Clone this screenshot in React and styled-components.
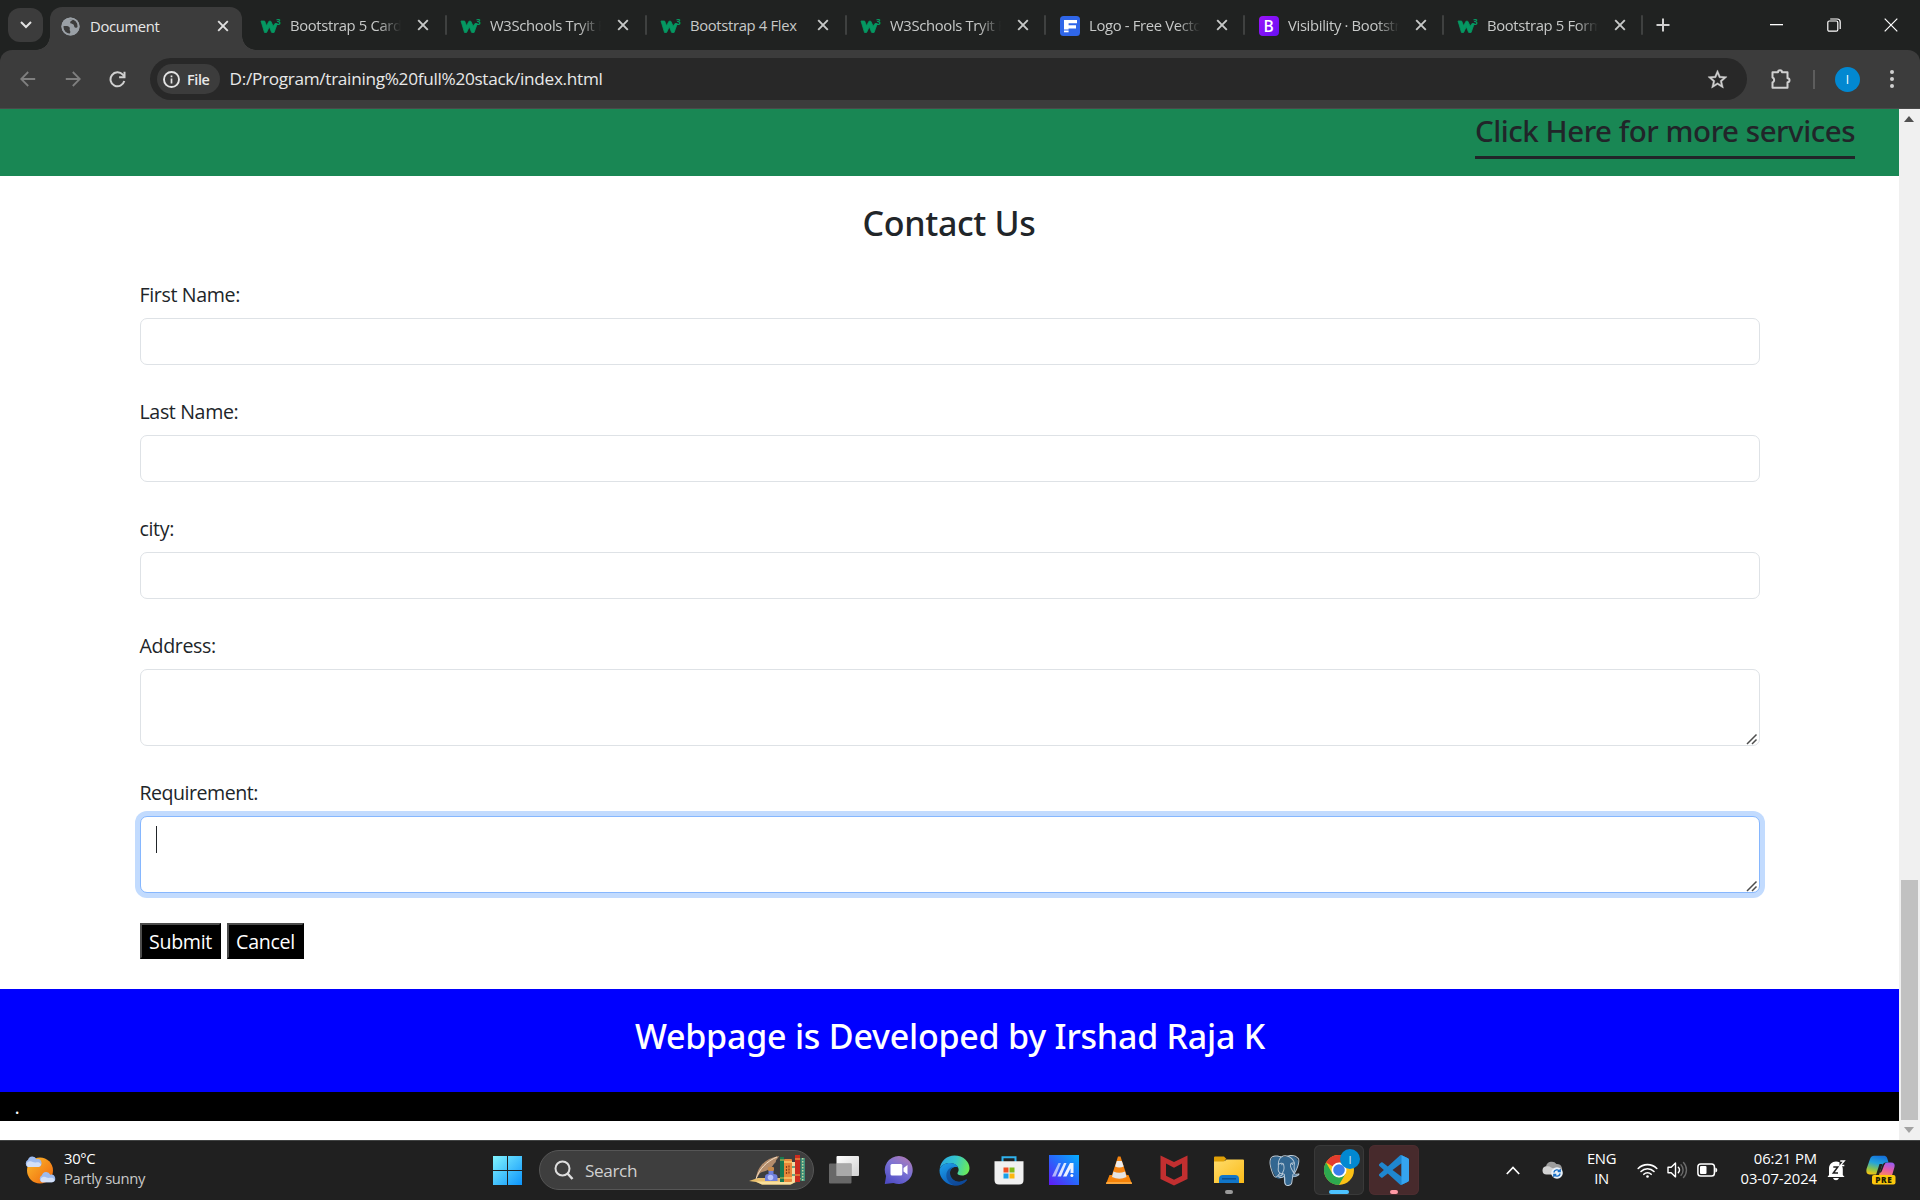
import React from 'react';
import styled, { createGlobalStyle, css } from 'styled-components';
import { SiPostgresql } from 'react-icons/si';

const sans = '"Open Sans", "Noto Sans", sans-serif';
const display = '"Noto Sans", "Open Sans", sans-serif';

const GlobalStyle = createGlobalStyle`
  *, *::before, *::after { box-sizing: border-box; }
  html, body { margin: 0; padding: 0; overflow: hidden; background: #fff; }
  body { font-family: ${sans}; }
  svg { display: block; flex: none; }
`;

const Screen = styled.div`
  width: 1920px;
  height: 1200px;
  display: grid;
  grid-template-rows: 50px 59px 1031px 60px;
  overflow: hidden;
`;

/* ---------- Tab strip ---------- */

const TabStrip = styled.header`
  display: flex;
  align-items: stretch;
  background: #202221;
  color: #e3e3e3;
`;

const TabSearch = styled.button`
  width: 35px;
  height: 34px;
  margin: 8px 3px 0 8px;
  padding: 0;
  border: 0;
  border-radius: 12px;
  background: #3c3c3c;
  display: grid;
  place-items: center;
`;

const Tab = styled.div`
  position: relative;
  display: flex;
  align-items: center;
  flex: none;
  width: ${(p) => p.$width}px;
  height: 50px;
  padding: 0 0 0 14px;
  ${(p) =>
    !p.$active &&
    css`
      &::after {
        content: '';
        position: absolute;
        right: -1px;
        top: 15px;
        width: 2px;
        height: 20px;
        border-radius: 1px;
        background: #3f4140;
      }
    `}
  ${(p) =>
    p.$active &&
    css`
      margin: 7px 4px 0;
      height: 43px;
      padding: 0 0 6px 10px;
      border-radius: 12px 12px 0 0;
      background: #3c3c3c;
      &::before,
      &::after {
        content: '';
        position: absolute;
        bottom: 0;
        width: 14px;
        height: 14px;
      }
      &::before {
        left: -14px;
        background: radial-gradient(circle at 0 0, transparent 13.5px, #3c3c3c 14px);
      }
      &::after {
        right: -14px;
        background: radial-gradient(circle at 100% 0, transparent 13.5px, #3c3c3c 14px);
      }
    `}
`;

const TabIcon = styled.span`
  width: 21px;
  height: 24px;
  margin-top: 1px;
  display: grid;
  place-items: center;
`;

const TabTitle = styled.span`
  width: 111px;
  margin-left: 9px;
  overflow: hidden;
  white-space: nowrap;
  font-size: 14.8px;
  line-height: 24px;
  letter-spacing: -0.33px;
  color: ${(p) => (p.$active ? '#e8e8e8' : '#c7c9c8')};
  ${(p) =>
    p.$fade &&
    css`
      mask-image: linear-gradient(90deg, #000 80%, transparent 100%);
    `}
`;

const TabClose = styled.span`
  width: 20px;
  height: 24px;
  margin-left: 11.5px;
  display: grid;
  place-items: center;
`;

const NewTab = styled.span`
  width: 42px;
  display: grid;
  place-items: center;
`;

const WindowControls = styled.div`
  margin-left: auto;
  margin-right: 1px;
  display: grid;
  grid-template-columns: repeat(3, 57px);
  place-items: center;
  height: 49px;
`;

const Letter = styled.span`
  display: grid;
  place-items: center;
  width: 20px;
  height: 20px;
  border-radius: 4px;
  background: linear-gradient(135deg, #9b12fb, #6610f2);
  color: #fff;
  font: 600 15.5px/20px ${sans};
`;

/* ---------- Toolbar ---------- */

const ToolbarBack = styled.div`
  background: #202221;
`;

const Toolbar = styled.div`
  display: flex;
  align-items: center;
  height: 59px;
  border-radius: 12px 12px 0 0;
  border-bottom: 1px solid #4a4a4a;
  background: #3c3c3c;
  padding-left: 5px;
`;

const ToolButton = styled.span`
  width: 45px;
  height: 36px;
  display: grid;
  place-items: center;
`;

const Omnibox = styled.div`
  display: flex;
  align-items: center;
  width: 1597px;
  height: 42px;
  margin-left: 10px;
  padding: 0 18px 0 7px;
  border-radius: 21px;
  background: #282828;
`;

const FileChip = styled.span`
  display: flex;
  align-items: center;
  gap: 7px;
  width: 63px;
  height: 30px;
  padding-left: 6px;
  border-radius: 15px;
  background: #3c3c3c;
  color: #e8e8e8;
  font-size: 14.4px;
  font-weight: 600;
  letter-spacing: -0.4px;
`;

const Address = styled.span`
  flex: 1;
  margin-left: 9.5px;
  color: #e8e8e8;
  font-size: 17.2px;
  letter-spacing: -0.3px;
  line-height: 24px;
`;

const ToolbarEnd = styled.div`
  display: flex;
  align-items: center;
  margin-left: 23px;
`;

const Divider = styled.span`
  width: 2px;
  height: 19px;
  margin: 0 20px 0 21px;
  background: #5d5d5d;
`;

const Avatar = styled.span`
  display: grid;
  place-items: center;
  width: 25px;
  height: 25px;
  margin-right: 29px;
  border-radius: 50%;
  background: #0288d1;
  color: #fff;
  font-size: 12px;
`;

/* ---------- Page ---------- */

const Viewport = styled.div`
  display: grid;
  grid-template-columns: 1899px 21px;
  background: #fff;
`;

const Page = styled.main`
  display: flex;
  flex-direction: column;
  color: #212529;
`;

const Services = styled.section`
  display: flex;
  justify-content: flex-end;
  height: 67px;
  padding-right: 44px;
  background: #198754;
`;

const ServicesLink = styled.a`
  width: 380px;
  height: 50px;
  border-bottom: 3px solid #212529;
  font: 500 29.5px/43px ${display};
  letter-spacing: -0.46px;
  white-space: nowrap;
`;

const Contact = styled.form`
  display: flex;
  flex-direction: column;
  height: 813px;
  padding: 0 140px 0 139px;
`;

const Heading = styled.h2`
  margin: 24px 0 37px;
  text-align: center;
  font: 500 34px/46px ${display};
  letter-spacing: -0.35px;
`;

const Field = styled.div`
  display: flex;
  flex-direction: column;
  height: ${(p) => (p.$tall ? 147 : 117)}px;
  margin: 0 -1px 0 1px;
`;

const Label = styled.label`
  height: 35px;
  margin-left: -0.5px;
  font-size: 19.6px;
  line-height: 23px;
  letter-spacing: ${(p) => p.$tracking || -0.36}px;
`;

const control = css`
  display: block;
  width: 100%;
  margin: 0;
  border: 1px solid #dee2e6;
  border-radius: 7px;
  outline: 0;
  background: #fff;
  font: 400 20px ${sans};
  padding: 8px 15px;
`;

const Input = styled.input`
  ${control}
  height: 47px;
`;

const AreaBox = styled.div`
  position: relative;
  height: 77px;
`;

const TextArea = styled.textarea`
  ${control}
  height: 77px;
  resize: none;
  ${(p) =>
    p.$focused &&
    css`
      border-color: #86b7fe;
      box-shadow: 0 0 0 5px #c2dbfe;
    `}
`;

const Grip = styled.svg`
  position: absolute;
  right: 2px;
  bottom: 1px;
`;

const Caret = styled.span`
  position: absolute;
  left: 16px;
  top: 10px;
  width: 1px;
  height: 27px;
  background: #212529;
`;

const Actions = styled.div`
  display: flex;
  gap: 6px;
  margin: -5px 0 0 1px;
`;

const Button = styled.button`
  width: ${(p) => p.$width}px;
  height: 36px;
  padding: 1px 0 0;
  border: 2px solid;
  border-color: #4c4c4c #000 #000 #4c4c4c;
  background: #000;
  color: #fff;
  font: 400 19.6px/30px ${sans};
  letter-spacing: -0.3px;
`;

const Credit = styled.footer`
  height: 103px;
  padding: 24px 0 0 1px;
  background: #00f;
  color: #fff;
  text-align: center;
  font: 500 34px/46px ${display};
  letter-spacing: -0.23px;
`;

const BottomStrip = styled.div`
  height: 29px;
  padding-left: 14.5px;
  background: #000;
  color: #fff;
  font-size: 20px;
  line-height: 30px;
`;

const Scrollbar = styled.div`
  display: flex;
  flex-direction: column;
  align-items: center;
  background: #f0f0f0;
`;

const ScrollArrow = styled.span`
  width: 21px;
  height: 20px;
  padding-right: 2px;
  display: grid;
  place-items: center;
`;

const Thumb = styled.span`
  width: 17px;
  height: 240px;
  margin-top: auto;
  background: #c1c1c1;
`;

/* ---------- Taskbar ---------- */

const Taskbar = styled.footer`
  display: grid;
  grid-template-columns: 483px 936px 1fr;
  align-items: center;
  padding-bottom: 1px;
  border-top: 1px solid #414343;
  background: #202020;
  color: #fff;
`;

const Weather = styled.div`
  display: flex;
  align-items: center;
  padding-left: 24px;
  gap: 8px;
`;

const Lines = styled.div`
  display: flex;
  flex-direction: column;
  align-items: ${(p) => p.$align || 'flex-start'};
  margin-bottom: 4px;
  font-size: 14.8px;
  line-height: 20px;
  letter-spacing: ${(p) => p.$tracking || -0.33}px;
  white-space: nowrap;
`;

const Muted = styled.span`
  color: #c9c9c9;
`;

const Apps = styled.div`
  display: flex;
  align-items: center;
  gap: 5px;
`;

const AppButton = styled.span`
  position: relative;
  display: grid;
  place-items: center;
  width: 50px;
  height: 50px;
  border-radius: 6px;
  background: ${(p) => p.$bg || 'transparent'};
  box-shadow: ${(p) => (p.$ring ? `inset 0 0 0 1px ${p.$ring}` : 'none')};
`;

const Running = styled.span`
  position: absolute;
  bottom: 1px;
  left: 50%;
  width: ${(p) => p.$width}px;
  height: 4px;
  border-radius: 2px;
  background: ${(p) => p.$color};
  transform: translateX(-50%);
`;

const Profile = styled.span`
  position: absolute;
  left: 26px;
  top: 4px;
  display: grid;
  place-items: center;
  width: 20px;
  height: 20px;
  border-radius: 50%;
  background: #0288d1;
  color: #d6ecf9;
  font-size: 11px;
`;

const Search = styled.div`
  display: flex;
  align-items: center;
  width: 275px;
  height: 40px;
  margin-left: 1px;
  padding: 0 7px 0 14px;
  border: 1px solid #565656;
  border-radius: 20px;
  background: #3e3e3e;
`;

const SearchText = styled.span`
  flex: 1;
  margin-left: 11px;
  color: #d0d0d0;
  font-size: 17.2px;
  letter-spacing: -0.4px;
`;

const Tray = styled.div`
  display: grid;
  grid-template-columns: 101px 44px 75px 19px 30px 38px 91px 38px 1fr;
  align-items: center;
`;

const TrayItem = styled.span`
  display: flex;
  justify-content: ${(p) => p.$at || 'flex-start'};
  padding-left: ${(p) => p.$indent || 0}px;
`;

/* ---------- Icons ---------- */

const Close = ({ color = '#e0e0e0' }) => (
  <svg width="12" height="12" viewBox="0 0 12 12" stroke={color} strokeWidth="1.9">
    <path d="M1.2 1.2l9.6 9.6M10.8 1.2l-9.6 9.6" />
  </svg>
);

const Globe = () => (
  <svg width="19" height="19" viewBox="0 0 19 19">
    <circle cx="9.5" cy="9.5" r="9" fill="#9aa0a6" />
    <path d="M2.3 9.2c2.6-.6 5.2-.3 6.2 1 .9 1.2-.4 2.3.5 3.6.7 1 .2 2.4-.5 3.200C5 16.5 2 13.500 2.300 9.200zM8 2.300c1.400-.5 2.700-.4 3.800 0-.2 1.500-2.400 1.500-2.600 3-.2 1.700 2.300 1.200 3.300 2.300 1 1.200.3 2.800 2 3.100 1 .2 1.700-.4 2.200-1 .1-3.800-1.600-6.200-4-7.400" fill="#3c3c3c" />
    <circle cx="9.500" cy="9.500" r="8.200" fill="none" stroke="#9aa0a6" strokeWidth="1.800" />
  </svg>
);

const W3 = () => (
  <svg width="21" height="18" viewBox="0 0 21 18">
    <path d="M1 4h3.600l2 4.800L9 4.200h1.800l2.400 5L15 6.500h2.300l-3.200 9h-2.400L9.300 9.800 6.600 15.500H4.500z" fill="#059862" stroke="#059862" strokeWidth=".8" />
    <text x="16" y="7.500" fill="#059862" fontSize="8.500" fontWeight="700" fontFamily="Open Sans, sans-serif">3</text>
  </svg>
);

const LogoF = () => (
  <svg width="20" height="20" viewBox="0 0 20 20">
    <rect width="20" height="20" rx="3.500" fill="#2f66e8" />
    <path d="M4 4h13v3.200H8.600v2H16v3.200H8.600v1H4z" fill="#fff" />
    <path d="M4 14.500h4.600v1.800H4z" fill="#fff" />
  </svg>
);

const Arrow = ({ flip }) => (
  <svg width="16" height="16" viewBox="0 0 16 16" fill="none" stroke="#7f7f7f" strokeWidth="1.800">
    {flip ? <path d="M.8 8h13.500M7.800 1l7 7-7 7" /> : <path d="M15.200 8H1.700M8.200 1l-7 7 7 7" />}
  </svg>
);

const Reload = () => (
  <svg width="17" height="17" viewBox="0 0 17 17" fill="none" stroke="#d0d0d0" strokeWidth="2">
    <path d="M15.300 10.100A7 7 0 1 1 13.800 3.700L15.500 5.700" />
    <path d="M15.500 .8v5.400h-5.400" />
  </svg>
);

const Info = () => (
  <svg width="17" height="17" viewBox="0 0 17 17" fill="none" stroke="#e3e3e3">
    <circle cx="8.500" cy="8.500" r="7.500" strokeWidth="1.900" />
    <path d="M8.500 7.600v5M8.500 4.400v1.800" strokeWidth="1.700" />
  </svg>
);

const Star = () => (
  <svg width="23" height="23" viewBox="0 0 24 24" fill="#d0d0d0" stroke="#d0d0d0" strokeWidth=".4">
    <path d="M22 9.240l-7.190-.62L12 2 9.190 8.630 2 9.240l5.460 4.730L5.820 21 12 17.270 18.180 21l-1.630-7.030L22 9.240zM12 15.400l-3.760 2.270 1-4.280-3.320-2.880 4.380-.38L12 6.100l1.710 4.040 4.380.38-3.320 2.880 1 4.280L12 15.400z" />
  </svg>
);

const Puzzle = () => (
  <svg width="22" height="22" viewBox="0 0 22 22" fill="none" stroke="#d0d0d0" strokeWidth="2" strokeLinejoin="round">
    <path d="M2.500 4.200h5.500a2 2 0 0 1 4 0h5.500v6a2 2 0 0 1 0 4v5.600h-15v-5.300a2.700 2.700 0 0 0 0-5z" />
  </svg>
);

const Dots = () => (
  <svg width="6" height="20" viewBox="0 0 6 20" fill="#d0d0d0">
    <circle cx="3" cy="3" r="2" />
    <circle cx="3" cy="10" r="2" />
    <circle cx="3" cy="17" r="2" />
  </svg>
);

const GripIcon = () => (
  <Grip width="12" height="12" viewBox="0 0 12 12" stroke="#4d4d4d" strokeWidth="1.500">
    <path d="M1 11L10.500 1.500M6 11l4.500-4.500" />
  </Grip>
);

const Cloud = ({ x, y, s = 1 }) => (
  <g transform={`translate(${x} ${y}) scale(${s})`}>
    <path d="M4 11a4 4 0 0 1 0-7.200A4.500 4.500 0 0 1 12.500 3.200 3.900 3.900 0 0 1 14.500 11z" fill="#9dbbf0" />
    <path d="M4 11a3 3 0 0 1 1-5.500c3-1 4 1.500 7 1 2.500-.4 4 0 5 2A3 3 0 0 1 14.500 11z" fill="#d3e0f8" />
  </g>
);

const Sun = () => (
  <svg width="32" height="30" viewBox="0 0 32 30">
    <defs>
      <linearGradient id="sun" x1="0" y1="0" x2="1" y2="1">
        <stop offset="0" stopColor="#fbbc2c" />
        <stop offset="1" stopColor="#f0640c" />
      </linearGradient>
    </defs>
    <circle cx="16" cy="15.500" r="13" fill="url(#sun)" />
    <Cloud x="0" y="1" />
    <Cloud x="14" y="16.500" s="0.980" />
  </svg>
);

const Start = () => (
  <svg width="30" height="30" viewBox="0 0 30 30">
    <defs>
      <linearGradient id="win" x1="0" y1="0" x2="30" y2="30" gradientUnits="userSpaceOnUse">
        <stop offset="0" stopColor="#83f5fe" />
        <stop offset="1" stopColor="#0a92fb" />
      </linearGradient>
    </defs>
    <path d="M0 1h14v14H0zM15 1h14v14H15zM0 16h14v14H0zM15 16h14v14H15z" fill="url(#win)" />
  </svg>
);

const Magnifier = () => (
  <svg width="20" height="20" viewBox="0 0 20 20" fill="none" stroke="#dedede" strokeWidth="2">
    <circle cx="8.500" cy="8.500" r="7" />
    <path d="M13.500 13.500l5 5.500" strokeWidth="2.500" />
  </svg>
);

const Books = () => (
  <svg width="58" height="30" viewBox="0 0 58 30">
    <path d="M1 26l9-3h45l-7 4-6 2.500H14L8 27z" fill="#e9bf6d" />
    <path d="M8 26.500h40l-5 3H14z" fill="#f9df9c" />
    <path d="M8 24C9 12 17 3 31 1c-1 3-4 4-3 6-3 2-3 5-7 7-3 3-6 2-9 4z" fill="#b48d6c" />
    <path d="M8 24C11 14 19 6 29 2" stroke="#f3dfc5" fill="none" />
    <rect x="20" y="12" width="6" height="4" rx="1" fill="#c58a4d" />
    <path d="M20.500 16h5v3c3 0 4 1 4 3v4H17v-4c0-2 1-3 3.500-3z" fill="#6f7fdb" />
    <circle cx="22.500" cy="22.500" r="2.800" fill="#b8c2fa" />
    <rect x="32" y="2" width="4" height="25" fill="#187a52" />
    <path d="M32 5h4M32 23h4" stroke="#d9b84a" />
    <rect x="36" y="4" width="8" height="23" rx="1" fill="#e8893a" />
    <path d="M36 7h8M36 23h8" stroke="#f9c76a" strokeWidth="1.500" />
    <path d="M38.500 11v8M41 10.500v9" stroke="#8a3b16" strokeWidth="1.200" strokeDasharray="2 1" />
    <rect x="44" y="7" width="3" height="20" fill="#f0dca6" />
    <path d="M44 12h3M44 20h3" stroke="#3f8f78" strokeWidth="1.500" />
    <rect x="47" y="0" width="5" height="27" fill="#cc2b1f" />
    <path d="M47 4h5M47 20h5" stroke="#f4b34a" strokeWidth="1.200" />
    <rect x="52.500" y="3" width="4.500" height="23" fill="#3f8f78" />
    <path d="M54.700 3v23" stroke="#c6d79b" strokeDasharray="1.500 1.500" strokeWidth="1.500" />
  </svg>
);

const TaskView = () => (
  <svg width="30" height="30" viewBox="0 0 30 30">
    <defs>
      <linearGradient id="tv" x1="0" y1="0" x2="1" y2="1">
        <stop offset="0" stopColor="#fff" />
        <stop offset="1" stopColor="#d2d2d2" />
      </linearGradient>
    </defs>
    <rect x="7.500" y="1" width="22.500" height="20" rx="1" fill="url(#tv)" />
    <rect x="0" y="8.500" width="22.500" height="20" rx="1" fill="#7c7c7c" fillOpacity=".78" />
    <rect x="7.500" y="8.500" width="15" height="12.500" fill="#a9a9a9" />
  </svg>
);

const Chat = () => (
  <svg width="30" height="30" viewBox="0 0 30 30">
    <defs>
      <linearGradient id="ch" x1=".8" y1="0" x2=".2" y2="1">
        <stop offset="0" stopColor="#b07ab6" />
        <stop offset=".45" stopColor="#7a72d4" />
        <stop offset="1" stopColor="#4f4cc4" />
      </linearGradient>
    </defs>
    <path d="M15 1a14 14 0 1 1-5.500 27L.8 29l1.300-8A14 14 0 0 1 15 1z" fill="url(#ch)" />
    <rect x="6.500" y="9" width="11.800" height="11.500" rx="1.500" fill="#fff" />
    <path d="M19.500 13l4-3v9.500l-4-3z" fill="#fff" />
  </svg>
);

const Edge = () => (
  <svg width="31" height="31" viewBox="0 0 31 31">
    <defs>
      <linearGradient id="eg" x1="0" y1=".3" x2="1" y2=".5">
        <stop offset="0" stopColor="#2aa8e2" />
        <stop offset=".5" stopColor="#35c5cc" />
        <stop offset="1" stopColor="#6bea58" />
      </linearGradient>
      <linearGradient id="eb" x1="0" y1="0" x2=".6" y2="1">
        <stop offset="0" stopColor="#1ea2ea" />
        <stop offset="1" stopColor="#0a57b8" />
      </linearGradient>
    </defs>
    <path d="M.6 14C2 5.500 8 .5 15.500.5 24.500.5 30.500 7 30.500 13c0 5-3.500 7.500-7.500 7.500-3 0-5-1-4.500-2.500 1-1.500 1.500-3 .8-5C18 9.500 14.500 8 11 8 6 8 2 10.500.6 14z" fill="url(#eg)" />
    <path d="M.5 15C1.500 10.500 6 8 11 8c4 0 7 1.700 8.200 4.500C14.500 11 11 14 11 18c0 6 5.500 9.500 10.500 8.500 2.500-.4 4.500-1.500 5.500-2 .8-.3 1.200.2.600 1C24.500 29.500 20 31 15.500 30.500 7 30 .2 23 .5 15z" fill="url(#eb)" />
    <path d="M11 18c0 6 5.500 9.500 10.500 8.500 2.500-.4 4.500-1.500 5.500-2 .8-.3 1.200.2.600 1-3 4-7.500 5.200-11.600 5C10 29 6.500 24 7.500 18.500 8.300 14.500 12 11.500 15 12c-2.500.8-4 3-4 6z" fill="#103f85" opacity=".6" />
  </svg>
);

const Store = () => (
  <svg width="30" height="30" viewBox="0 0 30 30">
    <path d="M8.500 7V2.300h13V7" fill="none" stroke="#2fb1ec" strokeWidth="2" />
    <path d="M.5 6.200h29V25q0 4.500-4.500 4.500H5Q.5 29.500.5 25z" fill="#f0f0f0" />
    <path d="M9.500 12.500h5v5h-5z" fill="#f04e23" />
    <path d="M15.500 12.500h5v5h-5z" fill="#80b918" />
    <path d="M9.500 18.500h5v5h-5z" fill="#1a9fe8" />
    <path d="M15.500 18.500h5v5h-5z" fill="#fbb70d" />
  </svg>
);

const Armoury = () => (
  <svg width="30" height="30" viewBox="0 0 30 30">
    <defs>
      <linearGradient id="ar" x1="0" y1="1" x2="1" y2="0">
        <stop offset="0" stopColor="#6119f5" />
        <stop offset=".5" stopColor="#2867fb" />
        <stop offset="1" stopColor="#05aefc" />
      </linearGradient>
    </defs>
    <rect width="30" height="30" fill="url(#ar)" />
    <path d="M9.500 8H12L6.500 21.500H3z" fill="#fff" opacity=".6" />
    <path d="M15 8h2.500L12 21.500H8.500z" fill="#fff" opacity=".85" />
    <path d="M21 8h3.500v10h-3v-4.500L17.500 21.500H14z" fill="#eef3ff" />
    <circle cx="22.900" cy="20.600" r="1.500" fill="#fff" />
  </svg>
);

const Vlc = () => (
  <svg width="28" height="30" viewBox="0 0 28 30">
    <path d="M4.500 20h19l3.500 9H1z" fill="#f78307" />
    <path d="M13 1.500h2.500L22.500 23q-8 4.500-16.500 0z" fill="#f68512" />
    <path d="M11.800 6h5l1.900 5.500q-4.400 2-8.600 0z" fill="#ededed" />
    <path d="M8.500 16.500q5.500 2.500 11.500 0l1.500 5.500q-7 3.500-14.500 0z" fill="#e4e4e4" />
    <path d="M1.500 27h25l.5 2H1z" fill="#fba63b" />
  </svg>
);

const Mcafee = () => (
  <svg width="28" height="31" viewBox="0 0 28 31">
    <path d="M.5.5L14 7 27.500.5V24L14 30.500.500 24zM6 8.500v12.300l8 4 8-4V8.500l-8 4.300z" fill="#c22f30" fillRule="evenodd" />
  </svg>
);

const Folder = () => (
  <svg width="30" height="28" viewBox="0 0 30 28">
    <defs>
      <linearGradient id="fo" x1="0" y1="0" x2="1" y2="1">
        <stop offset="0" stopColor="#ffdc6b" />
        <stop offset="1" stopColor="#fbbb18" />
      </linearGradient>
    </defs>
    <path d="M0 1.500Q0 .5 1 .5h9l3 3h-1.500l-2 3H0z" fill="#e0a006" />
    <path d="M0 5.500h9.500L13 3.500h16q1 0 1 1V27H0z" fill="url(#fo)" />
    <path d="M5 27v-4q0-4 4-4h12q4 0 4 4v4z" fill="#1176c9" />
    <path d="M8 22.800h14" stroke="#0a4f91" strokeWidth="1.500" />
  </svg>
);

const Elephant = styled.span`
  position: relative;
  width: 31px;
  height: 31px;
  & > svg {
    position: absolute;
    inset: 0;
  }
`;

const Postgres = () => (
  <Elephant>
    <svg width="31" height="31" viewBox="0 0 24 24">
      <path d="M4.500 1.200Q9 .2 11.500 1.500 14 .5 18 .8q4 .8 4.800 4.500-.3 4-3 9.500 1.500.5 3 .4-1.500 2-5 2.200 0 4-1.800 5.600-2.500 1-4.200-1.200l-.6-5q-3 2.600-5.500.8Q1.500 12 1 5.500 1.500 2 4.500 1.200z" fill="#336791" />
    </svg>
    <SiPostgresql size={31} color="#b9cad8" />
  </Elephant>
);

const Chrome = () => (
  <svg width="30" height="30" viewBox="0 0 30 30">
    <circle cx="15" cy="15" r="15" fill="#fbc116" />
    <path d="M15 15L2 7.500A15 15 0 0 1 28 7.500H15z" fill="#e33b2e" />
    <path d="M2 7.500A15 15 0 0 0 15 30l6.500-11.200L15 22.500 8.500 18.800z" fill="#2da94f" />
    <circle cx="15" cy="15" r="7.500" fill="#fff" />
    <circle cx="15" cy="15" r="5.800" fill="#3b7ded" />
  </svg>
);

const VsCode = () => (
  <svg width="30" height="30" viewBox="0 0 24 24">
    <path d="M23.150 2.587L18.210.210a1.494 1.494 0 0 0-1.705.290l-9.460 8.630-4.120-3.128a.999.999 0 0 0-1.276.057L.327 7.261A1 1 0 0 0 .326 8.740L3.899 12 .326 15.260a1 1 0 0 0 .001 1.479L1.650 17.940a.999.999 0 0 0 1.276.057l4.120-3.128 9.460 8.630a1.492 1.492 0 0 0 1.704.290l4.942-2.377A1.500 1.500 0 0 0 24 20.060V3.939a1.500 1.500 0 0 0-.850-1.352zm-5.146 14.861L10.826 12l7.178-5.448v10.896z" fill="#1f86cf" />
    <path d="M18 .2l5.150 2.387A1.500 1.500 0 0 1 24 3.939V20.060a1.500 1.500 0 0 1-.85 1.352L18 23.800z" fill="#35a4f0" />
  </svg>
);

const Onedrive = () => (
  <svg width="22" height="20" viewBox="0 0 22 20">
    <path d="M4.500 14a4 4 0 0 1-.5-7.800A6 6 0 0 1 14.500 4 5 5 0 0 1 18 13l-4 1z" fill="#9d9d9d" />
    <path d="M4.500 14.500a4 4 0 0 1 0-8c4-1 5 3 10 2l3 4-4 2z" fill="#d2d2d2" />
    <circle cx="15" cy="13" r="5.800" fill="#e9f1f9" />
    <path d="M11.800 12.500a3.400 3.400 0 0 1 6-1.300M18.200 13.500a3.400 3.400 0 0 1-6 1.300M18.200 9v2.500h-2.500M11.800 17v-2.500h2.500" fill="none" stroke="#1a6fc4" strokeWidth="1.300" />
  </svg>
);

const Wifi = () => (
  <svg width="21" height="17" viewBox="0 0 21 17" fill="none" stroke="#fff" strokeWidth="1.600" strokeLinecap="round">
    <path d="M1.200 6.500a13 13 0 0 1 18.600 0M4 9.500a9 9 0 0 1 13 0M6.800 12.300a5.200 5.200 0 0 1 7.400 0" />
    <circle cx="10.500" cy="14.500" r="1.300" fill="#fff" stroke="none" />
  </svg>
);

const Speaker = () => (
  <svg width="21" height="18" viewBox="0 0 21 18" fill="none" stroke="#fff" strokeWidth="1.400" strokeLinejoin="round" strokeLinecap="round">
    <path d="M1 6.300h3.200l4.300-4.200v13.800l-4.300-4.200H1z" />
    <path d="M11.300 6.300a4 4 0 0 1 0 5.400" />
    <path d="M14 3.800a7.500 7.500 0 0 1 0 10.400M16.500 1.500a11 11 0 0 1 0 15" stroke="#6b6b6b" />
  </svg>
);

const Battery = () => (
  <svg width="21" height="14" viewBox="0 0 21 14">
    <rect x=".9" y="1" width="16.500" height="12" rx="2.800" fill="none" stroke="#fff" strokeWidth="1.500" />
    <rect x="3" y="3" width="6.500" height="8" rx="1" fill="#fff" />
    <path d="M18.300 4.500q2 .5 2 2.500t-2 2.500z" fill="#fff" />
  </svg>
);

const Bell = () => (
  <svg width="19" height="21" viewBox="0 0 19 21">
    <path d="M2 15V8.500C2 4.500 5 1.500 9 1.500q2 0 3.500.8V6H15q.8 1.500.8 3v6l1.700 2H.5z" fill="#fff" />
    <path d="M6 18h6q-.8 2.200-3 2.200T6 18z" fill="#fff" />
    <path d="M6.300 7h4.500l-4.500 6h4.700" fill="none" stroke="#202020" strokeWidth="1.500" />
    <path d="M13.300 1h4l-4 4.500h4" fill="none" stroke="#fff" strokeWidth="1.300" />
  </svg>
);

const Copilot = () => (
  <svg width="31" height="30" viewBox="0 0 31 30">
    <defs>
      <linearGradient id="c1" x1=".6" y1="0" x2=".3" y2="1">
        <stop offset="0" stopColor="#1573dc" />
        <stop offset=".4" stopColor="#23a3dc" />
        <stop offset=".75" stopColor="#8cc44c" />
        <stop offset="1" stopColor="#f2c312" />
      </linearGradient>
      <linearGradient id="c2" x1=".7" y1="0" x2=".3" y2="1">
        <stop offset="0" stopColor="#9b5cf0" />
        <stop offset=".5" stopColor="#e45ba8" />
        <stop offset="1" stopColor="#fc8a5c" />
      </linearGradient>
    </defs>
    <path d="M22 7.500h4q4.500 0 3.500 4.500l-2.500 8.500H11L14 18q2.500 0 3.500-3.500l1.500-4Q20 7.500 22 7.500z" fill="url(#c2)" />
    <path d="M9 .8h10.500q2.500.2 3.500 5l.5 1.700H21q-3 0-4 3.500L14 19.500H4.500Q.5 19 1.500 14L5 4Q6.200.8 9 .8z" fill="url(#c1)" />
    <path d="M17.500 9l-3.500 11h-3l3.500-11z" fill="#202020" />
    <rect x="7" y="20" width="23.500" height="9.500" rx="2" fill="#fdc80c" />
    <text x="18.800" y="27.600" textAnchor="middle" fontSize="8.200" fontWeight="800" letterSpacing=".6" fill="#221d00" fontFamily="Open Sans, sans-serif">PRE</text>
  </svg>
);

/* ---------- Data ---------- */

const tabs = [
  { title: 'Bootstrap 5 Cards', icon: <W3 />, width: 200, fade: true },
  { title: 'W3Schools Tryit Editor', icon: <W3 />, width: 200, fade: true },
  { title: 'Bootstrap 4 Flex', icon: <W3 />, width: 200 },
  { title: 'W3Schools Tryit Editor', icon: <W3 />, width: 199, fade: true },
  { title: 'Logo - Free Vectors', icon: <LogoF />, width: 199, fade: true },
  { title: 'Visibility · Bootstrap', icon: <Letter>B</Letter>, width: 199, fade: true },
  { title: 'Bootstrap 5 Forms', icon: <W3 />, width: 199, fade: true },
];

const fields = [
  { label: 'First Name:' },
  { label: 'Last Name:' },
  { label: 'city:' },
  { label: 'Address:', area: true },
  { label: 'Requirement:', area: true, focused: true, tracking: -0.5 },
];

const apps = [
  { icon: <TaskView /> },
  { icon: <Chat /> },
  { icon: <Edge /> },
  { icon: <Store /> },
  { icon: <Armoury /> },
  { icon: <Vlc /> },
  { icon: <Mcafee /> },
  { icon: <Folder />, run: 8, color: '#9a9a9a' },
  { icon: <Postgres /> },
  { icon: <Chrome />, run: 20, color: '#4cc2ff', bg: '#2d2d2d', ring: '#393939', profile: true },
  { icon: <VsCode />, run: 8, color: '#ff99a4', bg: '#472a2c', ring: '#4c2d30' },
];

export default function App() {
  return (
    <Screen>
      <GlobalStyle />
      <TabStrip>
        <TabSearch>
          <svg width="12" height="8" viewBox="0 0 12 8" fill="none" stroke="#e3e3e3" strokeWidth="2">
            <path d="M1 1l5 5 5-5" />
          </svg>
        </TabSearch>
        <Tab $active $width={192}>
          <TabIcon><Globe /></TabIcon>
          <TabTitle $active>Document</TabTitle>
          <TabClose><Close /></TabClose>
        </Tab>
        {tabs.map((t, i) => (
          <Tab key={i} $width={t.width}>
            <TabIcon>{t.icon}</TabIcon>
            <TabTitle $fade={t.fade}>{t.title}</TabTitle>
            <TabClose><Close color="#c7c9c8" /></TabClose>
          </Tab>
        ))}
        <NewTab>
          <svg width="14" height="14" viewBox="0 0 14 14" stroke="#d0d0d0" strokeWidth="2">
            <path d="M7 .5v13M.5 7h13" />
          </svg>
        </NewTab>
        <WindowControls>
          <svg width="13" height="2" viewBox="0 0 13 2"><path d="M0 0h13v1.300H0z" fill="#fff" /></svg>
          <svg width="14" height="14" viewBox="0 0 14 14" fill="none" stroke="#fff" strokeWidth="1.200">
            <rect x=".8" y="3" width="10" height="10.200" rx="1.500" />
            <path d="M3.200 1h7q3 0 3 3v7" />
          </svg>
          <svg width="14" height="14" viewBox="0 0 14 14" stroke="#fff" strokeWidth="1.200"><path d="M.7.7l12.600 12.600M13.300.7L.7 13.300" /></svg>
        </WindowControls>
      </TabStrip>

      <ToolbarBack>
        <Toolbar>
          <ToolButton><Arrow /></ToolButton>
          <ToolButton><Arrow flip /></ToolButton>
          <ToolButton><Reload /></ToolButton>
          <Omnibox>
            <FileChip><Info />File</FileChip>
            <Address>D:/Program/training%20full%20stack/index.html</Address>
            <Star />
          </Omnibox>
          <ToolbarEnd>
            <Puzzle />
            <Divider />
            <Avatar>I</Avatar>
            <Dots />
          </ToolbarEnd>
        </Toolbar>
      </ToolbarBack>

      <Viewport>
        <Page>
          <Services>
            <ServicesLink>Click Here for more services</ServicesLink>
          </Services>
          <Contact>
            <Heading>Contact Us</Heading>
            {fields.map((f) => (
              <Field key={f.label} $tall={f.area}>
                <Label $tracking={f.tracking}>{f.label}</Label>
                {f.area ? (
                  <AreaBox>
                    <TextArea $focused={f.focused} />
                    {f.focused && <Caret />}
                    <GripIcon />
                  </AreaBox>
                ) : (
                  <Input type="text" />
                )}
              </Field>
            ))}
            <Actions>
              <Button type="button" $width={81}>Submit</Button>
              <Button type="button" $width={77}>Cancel</Button>
            </Actions>
          </Contact>
          <Credit>Webpage is Developed by Irshad Raja K</Credit>
          <BottomStrip>.</BottomStrip>
        </Page>
        <Scrollbar>
          <ScrollArrow>
            <svg width="10" height="6" viewBox="0 0 10 6"><path d="M0 6l5-6 5 6z" fill="#505050" /></svg>
          </ScrollArrow>
          <Thumb />
          <ScrollArrow>
            <svg width="10" height="6" viewBox="0 0 10 6"><path d="M0 0l5 6 5-6z" fill="#a3a3a3" /></svg>
          </ScrollArrow>
        </Scrollbar>
      </Viewport>

      <Taskbar>
        <Weather>
          <Sun />
          <Lines>
            <span>30°C</span>
            <Muted>Partly sunny</Muted>
          </Lines>
        </Weather>
        <Apps>
          <AppButton><Start /></AppButton>
          <Search>
            <Magnifier />
            <SearchText>Search</SearchText>
            <Books />
          </Search>
          {apps.map((a, i) => (
            <AppButton key={i} $bg={a.bg} $ring={a.ring}>
              {a.icon}
              {a.profile && <Profile>I</Profile>}
              {a.run && <Running $width={a.run} $color={a.color} />}
            </AppButton>
          ))}
        </Apps>
        <Tray>
          <TrayItem $at="flex-end">
            <svg width="14" height="9" viewBox="0 0 14 9" fill="none" stroke="#fff" strokeWidth="1.700"><path d="M.8 8L7 1.500 13.200 8" /></svg>
          </TrayItem>
          <TrayItem $at="flex-end"><Onedrive /></TrayItem>
          <TrayItem $at="center">
            <Lines $align="center">
              <span>ENG</span>
              <span>IN</span>
            </Lines>
          </TrayItem>
          <TrayItem $at="flex-end"><Wifi /></TrayItem>
          <TrayItem $at="flex-end"><Speaker /></TrayItem>
          <TrayItem $at="center"><Battery /></TrayItem>
          <TrayItem $at="flex-end">
            <Lines $align="flex-end" $tracking={-0.08}>
              <span>06:21 PM</span>
              <span>03-07-2024</span>
            </Lines>
          </TrayItem>
          <TrayItem $at="center"><Bell /></TrayItem>
          <TrayItem $indent={10}><Copilot /></TrayItem>
        </Tray>
      </Taskbar>
    </Screen>
  );
}
